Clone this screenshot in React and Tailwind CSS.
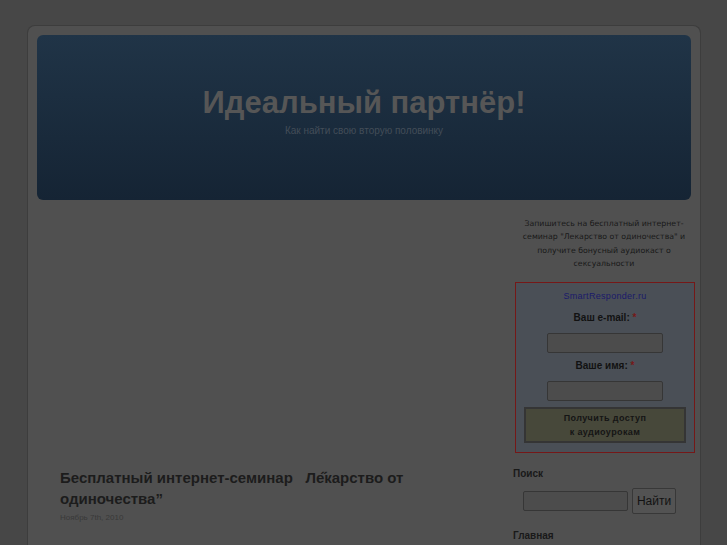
import React from "react";

const Sidebar = () => {
  return (
    <div className="mr-[-4px] w-[182px] shrink-0 pt-[17px]">
      <p
        className="px-[2px] text-center text-[7.8px] leading-[13.3px] text-[#181818]"
        style={{ fontFamily: '"DejaVu Sans", Verdana, sans-serif' }}
      >
        Запишитесь на бесплатный интернет-семинар "Лекарство от одиночества" и
        получите бонусный аудиокаст о сексуальности
      </p>

      <div className="mt-[12px] ml-[2px] border border-[#751818] bg-[#4a4f56] px-[8px] pb-[9px] pt-[7px] text-center">
        <div className="text-[9px] leading-[12px] tracking-[0.3px] text-[#1a1a6a]">
          SmartResponder.ru
        </div>
        <div className="mt-[10px] text-[10px] font-bold leading-[12px] text-[#121212]">
          Ваш e-mail: <span className="text-[#751818]">*</span>
        </div>
        <div className="mt-[9px] flex justify-center">
          <div className="h-[20px] w-[116px] rounded-[2px] border border-[#363636] bg-[#4c4c4c]" />
        </div>
        <div className="mt-[7px] text-[10px] font-bold leading-[12px] text-[#121212]">
          Ваше имя: <span className="text-[#751818]">*</span>
        </div>
        <div className="mt-[9px] flex justify-center">
          <div className="h-[20px] w-[116px] rounded-[2px] border border-[#363636] bg-[#4c4c4c]" />
        </div>
        <div className="mt-[6px] flex h-[36px] flex-col justify-center border-2 border-[#353535] bg-[#47483a] text-[9px] font-bold leading-[14px] tracking-[0.4px] text-[#151515]">
          <span>Получить доступ</span>
          <span>к аудиоурокам</span>
        </div>
      </div>

      <div className="mt-[15px] text-[10px] font-bold leading-[12px] text-[#191919]">
        Поиск
      </div>
      <div className="mt-[8px] flex items-center pl-[10px]">
        <div className="h-[20px] w-[105px] rounded-[2px] border border-[#363636] bg-[#4c4c4c]" />
        <div className="ml-[4px] flex h-[26px] w-[44px] items-center justify-center rounded-[2px] border border-[#383838] bg-[#535353] text-[12px] text-[#121212]">
          Найти
        </div>
      </div>
      <div className="mt-[16px] text-[10px] font-bold leading-[12px] text-[#191919]">
        Главная
      </div>
    </div>
  );
};

const Post = () => {
  return (
    <div className="pl-[23px] pt-[267px]">
      <h2 className="w-[370px] text-[15px] font-bold leading-[21px] text-[#1c1c1c]">
        Бесплатный интернет-семинар{"\u00a0\u00a0 "}Ле{"\u030b"}карство от
        одиночества”
      </h2>
      <div className="mt-[4px] text-[8px] leading-[10px] text-[#393939]">
        Ноябрь 7th, 2010
      </div>
    </div>
  );
};

export default function App() {
  return (
    <div
      className="h-[545px] w-[727px] overflow-hidden bg-[#474747] pt-[25px]"
      style={{ fontFamily: '"Liberation Sans", Arial, sans-serif' }}
    >
      <div className="ml-[27px] h-[540px] w-[674px] rounded-t-[8px] border border-b-0 border-[#3d3d3d] bg-[#505050] pl-[9px] pr-[9px] pt-[9px]">
        <div className="flex h-[165px] flex-col items-center rounded-[6px] bg-gradient-to-b from-[#203447] to-[#152434] pt-[50px]">
          <h1 className="text-[31px] font-bold leading-[36px] text-[#565656]">
            Идеальный партнёр!
          </h1>
          <div className="mt-[4px] text-[10px] leading-[11px] text-[#434d58]">
            Как найти свою вторую половинку
          </div>
        </div>
        <div className="flex justify-between">
          <Post />
          <Sidebar />
        </div>
      </div>
    </div>
  );
}
